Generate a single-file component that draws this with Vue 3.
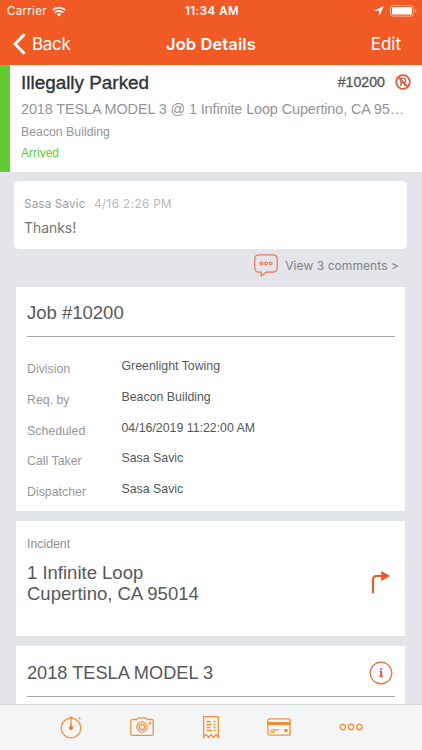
<script setup>
const details = [
  { label: 'Division', value: 'Greenlight Towing' },
  { label: 'Req. by', value: 'Beacon Building' },
  { label: 'Scheduled', value: '04/16/2019 11:22:00 AM' },
  { label: 'Call Taker', value: 'Sasa Savic' },
  { label: 'Dispatcher', value: 'Sasa Savic' },
]
</script>

<template>
  <div class="screen">
    <header class="top">
      <div class="status">
        <div class="carrier">
          <span>Carrier</span>
          <svg width="14" height="11" viewBox="0 0 14 11" fill="none" stroke="#fff" stroke-width="1.9">
            <path d="M.8 4.1a9 9 0 0 1 12.4 0M3 6.6a5.8 5.8 0 0 1 8 0" />
            <path d="M4.9 8.4 7 10.6l2.1-2.2a3 3 0 0 0-4.2 0z" fill="#fff" stroke="none" />
          </svg>
        </div>
        <span class="clock">11:34 AM</span>
        <div class="power">
          <svg width="10" height="10" viewBox="0 0 10 10"><path d="M10 0 0 4.8h5.1V10z" fill="#fff" /></svg>
          <svg width="27" height="12" viewBox="0 0 27 12">
            <rect x=".5" y=".5" width="23" height="10.6" rx="2.5" fill="none" stroke="#fff" stroke-opacity=".55" />
            <rect x="2" y="2" width="20" height="7.6" rx="1.2" fill="#fff" />
            <path d="M25 4v4q1.4-.6 1.4-2T25 4z" fill="#fff" fill-opacity=".55" />
          </svg>
        </div>
      </div>
      <nav class="nav">
        <div class="back">
          <svg width="13" height="22" viewBox="0 0 13 22" fill="none" stroke="#fff" stroke-width="3"><path d="M11.5 1.3 2.2 11l9.3 9.7" /></svg>
          <span>Back</span>
        </div>
        <h1>Job Details</h1>
        <span class="edit">Edit</span>
      </nav>
    </header>

    <section class="summary">
      <div class="summary-head">
        <h2>Illegally Parked</h2>
        <span class="number">#10200</span>
        <svg width="16" height="16" viewBox="0 0 16 16" fill="none">
          <path d="M6 12V4.3h2.5a2.1 2.1 0 0 1 0 4.3H6M8.5 8.6l1.8 3.3" stroke="#85868b" stroke-width="1.6" />
          <circle cx="8" cy="8" r="6.8" stroke="#e8582a" stroke-width="1.8" />
          <path d="m3.2 3.2 9.6 9.6" stroke="#e8582a" stroke-width="1.7" />
        </svg>
      </div>
      <p class="vehicle">2018 TESLA MODEL 3 @ 1 Infinite Loop Cupertino, CA 95…</p>
      <p class="client">Beacon Building</p>
      <p class="state">Arrived</p>
    </section>

    <main class="content">
      <article class="comment">
        <div class="meta"><span class="author">Sasa Savic</span><span class="date">4/16 2:26 PM</span></div>
        <p>Thanks!</p>
      </article>
      <div class="comments-link">
        <svg width="24" height="23" viewBox="0 0 24 23" fill="none" stroke="#ea774f">
          <path d="M5 .8h14Q23.2.8 23.2 5v9q0 4.2-4.2 4.2h-6.8l-5 3.8v-3.8H5Q.8 18.2.8 14V5Q.8.8 5 .8z" stroke-width="1.2" />
          <g stroke-width="1.1"><circle cx="7.3" cy="9.5" r="1.4" /><circle cx="12" cy="9.5" r="1.4" /><circle cx="16.7" cy="9.5" r="1.4" /></g>
        </svg>
        <span>View 3 comments &gt;</span>
      </div>

      <section class="card job">
        <h3>Job #10200</h3>
        <dl>
          <div v-for="row in details" :key="row.label" class="row">
            <dt>{{ row.label }}</dt>
            <dd>{{ row.value }}</dd>
          </div>
        </dl>
      </section>

      <section class="card incident">
        <div>
          <p class="caption">Incident</p>
          <p class="address">1 Infinite Loop<br>Cupertino, CA 95014</p>
        </div>
        <svg width="20" height="24" viewBox="0 0 20 24" fill="none">
          <path d="M2 23.3V9.5Q2 6 5.5 6H12" stroke="#e8582a" stroke-width="2.1" />
          <path d="m10.2.9 9 5.1-9 5z" fill="#e8582a" />
        </svg>
      </section>

      <section class="card car">
        <div class="car-head">
          <h3>2018 TESLA MODEL 3</h3>
          <svg width="24" height="24" viewBox="0 0 24 24" fill="none">
            <circle cx="12" cy="12" r="10.8" stroke="#e36a47" stroke-width="1.2" />
            <path d="M10.6 10.6h1.6v4.8M10.4 15.5h3.4" stroke="#dd5b38" stroke-width="1.3" />
            <path d="M12.2 10v5.5" stroke="#dd5b38" stroke-width="1.9" />
            <circle cx="12.1" cy="8.3" r="1.1" fill="#dd5b38" />
          </svg>
        </div>
      </section>
    </main>

    <footer class="tabs">
      <svg width="24" height="24" viewBox="0 0 24 24" fill="none" stroke="#f5923b" stroke-width="1.3">
        <circle cx="12" cy="13" r="9.8" />
        <path d="M12 1.200v10M9.800 3.200H14M19.500 2.500l1.900 1.900" />
        <path d="m12 6.500.8 4.600a2 2 0 1 1-1.600 0z" fill="#f28522" stroke="none" />
      </svg>
      <svg width="24" height="20" viewBox="0 0 24 20" fill="none" stroke="#f5923b" stroke-width="1.3">
        <path d="M2.6 2.500h4.200L8.500.8h7l1.700 1.700h4.200q1.800 0 1.800 1.800v12.200q0 1.800-1.800 1.800H2.600Q.8 18.300.8 16.500V4.300q0-1.800 1.800-1.800z" />
        <circle cx="12" cy="10" r="5.100" /><circle cx="12" cy="10" r="2.700" /><circle cx="20" cy="6.200" r=".6" />
      </svg>
      <svg width="18" height="24" viewBox="0 0 18 24" fill="none" stroke="#f5923b" stroke-width="1.3">
        <path d="M1.600 21V1.600h14.800V21" />
        <path d="m1.500 19.500 0 3 2.500-3 2.500 3L9 19.500l2.500 3 2.500-3 2.500 3v-3" />
        <path d="M4.500 6.500h4M4.500 9.500h5M4.500 12.500h4M4.500 15.500h6M11.500 6.500h2M11.500 9.500h2M11.500 12.500h2M12 15.500h1.500" />
      </svg>
      <svg width="24" height="18" viewBox="0 0 24 18" fill="none" stroke="#f5923b" stroke-width="1.3">
        <rect x=".8" y=".8" width="22.400" height="16.400" rx="2" />
        <path d="M1 5.500h22" stroke="#f28522" stroke-width="2.800" />
        <path d="M3.500 11.800h8.500M3.500 14h4.500" />
        <path d="M17.500 11h3v3h-3z" fill="#f28522" stroke="none" />
      </svg>
      <svg width="24" height="8" viewBox="0 0 24 8" fill="none" stroke="#f5923b" stroke-width="1.400">
        <circle cx="3.700" cy="4" r="2.700" /><circle cx="12" cy="4" r="2.700" /><circle cx="20.300" cy="4" r="2.700" />
      </svg>
    </footer>
  </div>
</template>

<style>
body { margin: 0; overflow: hidden; }
</style>

<style scoped>
.screen { display: flex; flex-direction: column; width: 422px; height: 750px; overflow: hidden; background: #e4e5eb; font-family: "Liberation Sans", Arial, sans-serif; }
.screen * { box-sizing: border-box; }
h1, h2, h3, p, dl, dd { margin: 0; font-weight: 400; }
svg { display: block; flex: none; }
span, p, h1, h2, h3, dt, dd { white-space: nowrap; }

.top { flex: none; height: 65px; background: #f15a25; color: #fff; font-family: Inter, sans-serif; }
.status { display: grid; grid-template-columns: 1fr auto 1fr; height: 22px; padding: 0 5px 0 7px; align-items: center; font-size: 11.5px; }
.carrier { display: flex; align-items: center; gap: 5px; letter-spacing: .3px; }
.clock { font-weight: 600; font-size: 11.5px; letter-spacing: .5px; }
.power { display: flex; align-items: center; justify-content: flex-end; gap: 6px; }
.nav { display: grid; grid-template-columns: 1fr auto 1fr; height: 43px; padding: 0 21px 0 21px; align-items: center; font-size: 17px; }
.back { display: flex; align-items: center; gap: 6px; margin-left: -8px; letter-spacing: -.3px; }
.nav h1 { font-size: 16.5px; font-weight: 600; letter-spacing: .1px; }
.edit { justify-self: end; }

.summary { flex: none; height: 107px; padding: 8px 11px 0 11px; border-left: 10px solid #62cb31; background: #fff; color: #94959a; }
.summary-head { display: flex; align-items: center; height: 20px; }
.summary-head svg { margin-top: -2px; }
.summary h2 { flex: 1; font-size: 18.9px; line-height: 20px; color: #303338; -webkit-text-stroke: .35px #303338; }
.number { margin: -2px 10px 0 0; font-size: 14.2px; color: #55575b; -webkit-text-stroke: .3px #55575b; }
.vehicle { margin-top: 6px; font-size: 14.5px; line-height: 20px; letter-spacing: -.15px; }
.client { margin-top: 5px; font-size: 12.3px; line-height: 16px; }
.state { margin-top: 5px; font-size: 12px; line-height: 16px; color: #62cb31; }

.content { flex: 1; min-height: 0; overflow: hidden; padding: 9px 15px 0 14px; }
.comment { height: 68px; padding: 15px 10px; border-radius: 5px; background: #fff; font-family: Inter, sans-serif; }
.meta { display: flex; gap: 8.5px; height: 16px; align-items: center; font-size: 11.7px; letter-spacing: .15px; color: #9b9ca0; }
.date { color: #b7b8bb; letter-spacing: .4px; }
.comment p { margin-top: 6px; font-size: 13.9px; line-height: 20px; color: #707276; }
.comments-link { display: flex; align-items: center; justify-content: flex-end; gap: 7px; height: 38px; padding: 0 8px 6px 0; font-family: Inter, sans-serif; font-size: 12px; letter-spacing: .07px; color: #808186; }
.card { margin: 0 2px 10px; padding: 0 10px 0 11px; background: #fff; color: #55585c; }
.job { height: 224px; }
h3 { font-size: 18.5px; line-height: 22px; }
.job h3 { height: 50px; padding-top: 15px; border-bottom: 1px solid #a2a3a5; }
dl { padding-top: 20px; }
.row { display: grid; grid-template-columns: 94.5px 1fr; height: 30.8px; font-size: 12.35px; line-height: 18px; }
dt { padding-top: 3px; color: #96979b; }
.incident { display: flex; justify-content: space-between; align-items: flex-start; height: 115px; padding: 15px 14px 0 11px; }
.incident svg { margin-top: 34px; }
.caption { font-size: 12.3px; line-height: 16px; color: #8d8e92; }
.address { margin-top: 10px; font-size: 18.5px; line-height: 21px; }
.car { height: 120px; }
.car-head { display: flex; justify-content: space-between; align-items: center; height: 51px; padding: 3px 2px 0 0; border-bottom: 1px solid #a2a3a5; }
.car h3 { font-size: 18.2px; }
.tabs { flex: none; display: flex; justify-content: space-between; align-items: center; height: 46px; padding: 0 59px 2px 58.5px; border-top: 1px solid #d5d7d9; background: #f4f5f7; }
</style>
